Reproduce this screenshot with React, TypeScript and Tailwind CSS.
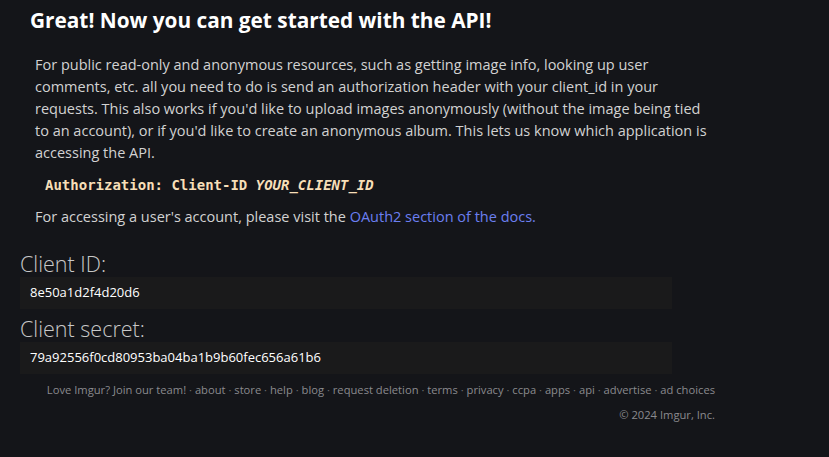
import React from "react";

export default function App() {
  const links = [
    "Love Imgur? Join our team!",
    "about",
    "store",
    "help",
    "blog",
    "request deletion",
    "terms",
    "privacy",
    "ccpa",
    "apps",
    "api",
    "advertise",
    "ad choices",
  ];
  return (
    <div className="min-h-screen w-full bg-[#141519] font-['Open_Sans',sans-serif] text-[#d6d6d6] overflow-hidden">
      <h1 className="pl-[30px] pt-[6px] text-[20.8px] font-bold leading-[28px] text-white">
        Great! Now you can get started with the API!
      </h1>
      <div className="pl-[35px] pt-[20px] text-[14.5px] leading-[22px] text-[#d2d2d2]">
        <p className="w-[682px]">
          For public read-only and anonymous resources, such as getting image info, looking up user
          comments, etc. all you need to do is send an authorization header with your client_id in your
          requests. This also works if you'd like to upload images anonymously (without the image being tied
          to an account), or if you'd like to create an anonymous album. This lets us know which application is
          accessing the API.
        </p>
        <div className="pl-[10px] pt-[10px] pb-[10px] font-['DejaVu_Sans_Mono',monospace] font-bold text-[14px] leading-[22px] text-[#f7dfb8]">
          Authorization: Client-ID <i>YOUR_CLIENT_ID</i>
        </div>
        <p>
          For accessing a user's account, please visit the{" "}
          <a className="text-[#6b7ff0]">OAuth2 section of the docs.</a>
        </p>
      </div>
      <div className="pl-[20px] pt-[23px] w-[672px]">
        <div className="text-[21.5px] font-light leading-[26px] text-[#c8c8c8]">Client ID:</div>
        <div className="h-[32px] bg-[#1a1a1b] pl-[10px] flex items-center text-[13px] text-white">
          8e50a1d2f4d20d6
        </div>
        <div className="mt-[7px] text-[21.5px] font-light leading-[26px] text-[#c8c8c8]">Client secret:</div>
        <div className="h-[32px] bg-[#1a1a1b] pl-[10px] flex items-center text-[13px] text-white">
          79a92556f0cd80953ba04ba1b9b60fec656a61b6
        </div>
      </div>
      <div className="w-[715px] pt-[7px] text-right text-[11.2px] leading-[18px] text-[#8a8a8e]">
        <div>
          {links.map((l, i) => (
            <span key={l}>
              {i > 0 && <span className="text-[#6a6a6e]"> · </span>}
              {l}
            </span>
          ))}
        </div>
        <div className="mt-[7px]">© 2024 Imgur, Inc.</div>
      </div>
    </div>
  );
}
